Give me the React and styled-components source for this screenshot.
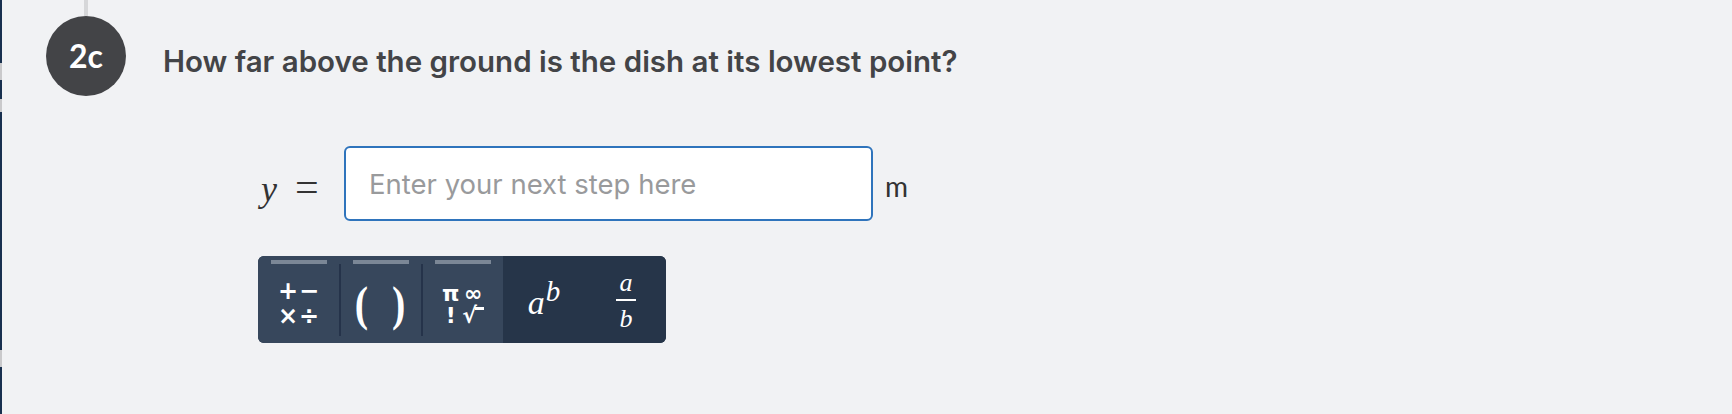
import React from "react";
import styled, { createGlobalStyle } from "styled-components";

const Global = createGlobalStyle`
  html, body { margin: 0; padding: 0; }
  body { background: #f1f2f4; font-family: "Inter", "Liberation Sans", sans-serif; }
`;

const Page = styled.div`
  display: flex;
  min-height: 414px;
  background: #f1f2f4;
`;

const EdgeStrip = styled.div`
  width: 2px;
  flex: none;
  display: flex;
  flex-direction: column;
  background: #18304f;
`;

const EdgeMark = styled.div`
  height: ${(p) => p.$h}px;
  margin-top: ${(p) => p.$top}px;
  background: #c9c9cb;
`;

const Content = styled.div`
  flex: 1;
  padding-left: 44px;
  display: flex;
  flex-direction: column;
`;

const StepRow = styled.div`
  display: flex;
  align-items: flex-start;
`;

const Marker = styled.div`
  width: 80px;
  display: flex;
  flex-direction: column;
  align-items: center;
`;

const Connector = styled.div`
  width: 4px;
  height: 16px;
  background: #d6d7d9;
`;

const Badge = styled.div`
  width: 80px;
  height: 80px;
  border-radius: 50%;
  background: #434447;
  color: #fff;
  display: flex;
  align-items: center;
  justify-content: center;
  font-family: "Lato", sans-serif;
  font-weight: 700;
  font-size: 32px;
  padding-bottom: 2px;
  box-sizing: border-box;
`;

const Heading = styled.h2`
  margin: 0 0 0 37px;
  padding-top: 41px;
  font-family: "Inter", sans-serif;
  font-weight: 600;
  font-size: 29.5px;
  line-height: 40px;
  color: #434447;
`;

const Answer = styled.div`
  margin-left: 212px;
  margin-top: 50px;
  display: flex;
  flex-direction: column;
  align-items: flex-start;
`;

const EquationRow = styled.div`
  display: flex;
  align-items: center;
`;

const Label = styled.span`
  font-family: "Liberation Serif", serif;
  color: #333;
  display: flex;
  align-items: baseline;
  margin-right: 22px;
  padding-top: 6px;
`;

const Var = styled.i`
  font-size: 36px;
  width: 34px;
  padding-left: 3px;
`;

const Eq = styled.span`
  font-size: 42px;
  width: 27px;
`;

const Field = styled.input`
  width: 529px;
  height: 75px;
  box-sizing: border-box;
  border: 2px solid #2f74bc;
  border-radius: 6px;
  background: #fff;
  padding: 0 23px;
  font-family: "Inter", sans-serif;
  font-size: 27.5px;
  color: #333;
  outline: none;
  &::placeholder { color: #999a9c; }
`;

const Unit = styled.span`
  margin-left: 12px;
  padding-top: 4px;
  font-family: "Lato", sans-serif;
  font-size: 28px;
  color: #333;
`;

const Keypad = styled.div`
  margin-top: 35px;
  display: flex;
  width: 408px;
  height: 87px;
  border-radius: 6px;
  overflow: hidden;
  background: #263549;
`;

const KeyGroup = styled.div`
  display: flex;
  background: ${(p) => (p.$light ? "#37475c" : "#263549")};
`;

const Key = styled.button`
  position: relative;
  width: ${(p) => p.$w}px;
  height: 87px;
  border: 0;
  padding: 0;
  margin: 0;
  background: transparent;
  color: #fff;
  display: flex;
  align-items: center;
  justify-content: center;
  cursor: pointer;
`;

const Divider = styled.div`
  width: 2px;
  margin: 8px 0 7px;
  background: #25334a;
`;

const TabBar = styled.span`
  position: absolute;
  top: 4px;
  left: 50%;
  transform: translateX(-50%);
  width: 56px;
  height: 4px;
  background: #7b8796;
`;

const OpsGrid = styled.span`
  display: grid;
  grid-template-columns: 21px 21px;
  font-family: "DejaVu Sans", sans-serif;
  font-weight: 700;
  font-size: 24px;
  line-height: 25px;
  text-align: center;
  margin-top: 8px;
`;

const Parens = styled.span`
  font-family: "Liberation Serif", serif;
  font-weight: 700;
  font-size: 40px;
  line-height: 40px;
  letter-spacing: 2px;
  display: inline-block;
  white-space: pre;
  transform: scaleY(1.22);
  margin-top: 8px;
`;

const SymGrid = styled.span`
  display: grid;
  grid-template-columns: auto auto;
  column-gap: 3px;
  font-family: "DejaVu Sans", sans-serif;
  font-weight: 700;
  font-size: 22px;
  line-height: 22px;
  margin-top: 10px;
`;

const Sqrt = styled.span`
  display: inline-flex;
  align-items: flex-start;
`;

const RootBar = styled.span`
  width: 9px;
  height: 3px;
  margin-top: 2px;
  margin-left: -2px;
  background: #fff;
`;

const Power = styled.span`
  display: inline-flex;
  align-items: baseline;
  font-family: "Liberation Serif", serif;
  font-style: italic;
  margin-top: 6px;
`;

const Base = styled.span`
  font-size: 34px;
`;

const Sup = styled.span`
  font-size: 29px;
  position: relative;
  top: -13px;
  margin-left: 1px;
`;

const Fraction = styled.span`
  display: inline-flex;
  flex-direction: column;
  align-items: center;
  font-family: "Liberation Serif", serif;
  font-style: italic;
  font-size: 26px;
  line-height: 20px;
  margin-top: 2px;
`;

const FracBar = styled.span`
  width: 20px;
  height: 2px;
  background: #fff;
  margin: 6px 0 8px;
`;

export default function App() {
  return (
    <>
      <Global />
      <Page>
        <EdgeStrip>
          <EdgeMark $top={63} $h={17} />
          <EdgeMark $top={19} $h={13} />
          <EdgeMark $top={238} $h={17} />
        </EdgeStrip>
        <Content>
          <StepRow>
            <Marker>
              <Connector />
              <Badge>2c</Badge>
            </Marker>
            <Heading>How far above the ground is the dish at its lowest point?</Heading>
          </StepRow>
          <Answer>
            <EquationRow>
              <Label>
                <Var>y</Var>
                <Eq>=</Eq>
              </Label>
              <Field placeholder="Enter your next step here" />
              <Unit>m</Unit>
            </EquationRow>
            <Keypad>
              <KeyGroup $light>
                <Key $w={81}>
                  <TabBar />
                  <OpsGrid>
                    <span>+</span>
                    <span>−</span>
                    <span>×</span>
                    <span>÷</span>
                  </OpsGrid>
                </Key>
                <Divider />
                <Key $w={80}>
                  <TabBar />
                  <Parens>{"(\u2002)"}</Parens>
                </Key>
                <Divider />
                <Key $w={80}>
                  <TabBar />
                  <SymGrid>
                    <span>π</span>
                    <span>∞</span>
                    <span>!</span>
                    <Sqrt>
                      <span>√</span>
                      <RootBar />
                    </Sqrt>
                  </SymGrid>
                </Key>
              </KeyGroup>
              <KeyGroup>
                <Key $w={82}>
                  <Power>
                    <Base>a</Base>
                    <Sup>b</Sup>
                  </Power>
                </Key>
                <Key $w={82}>
                  <Fraction>
                    <span>a</span>
                    <FracBar />
                    <span>b</span>
                  </Fraction>
                </Key>
              </KeyGroup>
            </Keypad>
          </Answer>
        </Content>
      </Page>
    </>
  );
}
